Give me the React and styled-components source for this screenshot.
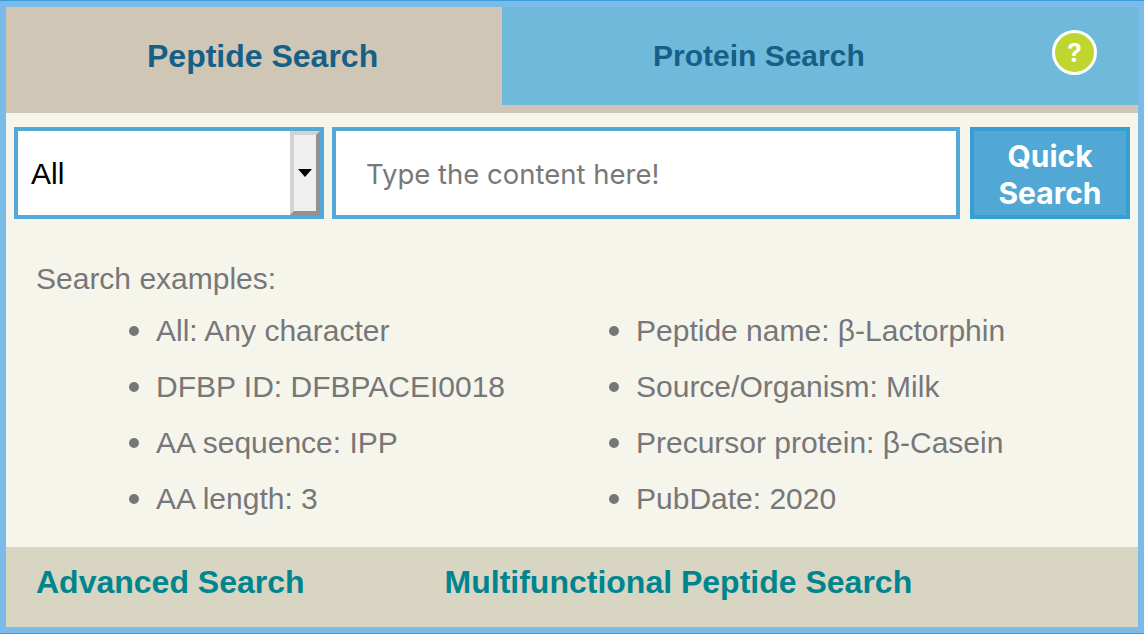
import React from "react";
import styled, { createGlobalStyle } from "styled-components";

const Global = createGlobalStyle`
  html, body { margin: 0; padding: 0; }
  body { width: 1144px; height: 634px; overflow: hidden; background: #7abbe9; font-family: "Liberation Sans", Arial, sans-serif; }
  * { box-sizing: border-box; }
`;

const Frame = styled.div`
  width: 1144px;
  height: 634px;
  padding: 6px;
  background: #7abbe9;
  border-top: 1px solid #3b9dd6;
  border-bottom: 1px solid #3b9dd6;
`;
const Panel = styled.div`
  height: 620px;
  display: flex;
  flex-direction: column;
  background: #f5f5ec;
`;
const Tabs = styled.div`
  display: flex;
  height: 106px;
  background: #d0c6b5;
  flex: none;
`;
const Tab = styled.div`
  height: ${(p) => (p.$active ? "106px" : "98px")};
  width: ${(p) => (p.$active ? "496px" : "636px")};
  background: ${(p) => (p.$active ? "#d0c6b5" : "#6fb9da")};
  position: relative;
  display: flex;
  align-items: center;
  padding-left: ${(p) => (p.$active ? "141px" : "151px")};
  padding-bottom: ${(p) => (p.$active ? "8px" : "0")};
  font-size: ${(p) => (p.$active ? "32px" : "30px")};
  font-weight: 700;
  color: #165f86;
`;
const Help = styled.span`
  position: absolute;
  left: 550px;
  top: 23px;
  width: 45px;
  height: 45px;
  border-radius: 50%;
  border: 3px solid #fff;
  background: #bed62f;
  color: #fff;
  font: 700 26px/39px "Inter", sans-serif;
  text-align: center;
`;
const SearchRow = styled.div`
  display: flex;
  padding: 14px 8px 0;
  height: 106px;
  flex: none;
`;
const SelectBox = styled.div`
  position: relative;
  width: 310px;
  height: 92px;
  margin-right: 8px;
  border: 4px solid #52a8d6;
  background: #fff;
`;
const Select = styled.select`
  appearance: none;
  width: 100%;
  height: 100%;
  border: 0;
  outline: 0;
  background: #fff;
  padding-left: 13px;
  font: 30px "Liberation Sans", sans-serif;
  color: #000;
`;
const Spinner = styled.span`
  position: absolute;
  right: 0;
  top: 0;
  bottom: 0;
  width: 30px;
  background: #efefef;
  border-style: solid;
  border-width: 4px;
  border-color: #d3d3d3 #929292 #929292 #d3d3d3;
  pointer-events: none;
  &::after {
    content: "";
    position: absolute;
    left: 4px;
    top: 34px;
    border-style: solid;
    border-width: 8px 7px 0;
    border-color: #000 transparent transparent;
  }
`;
const Query = styled.input`
  width: 628px;
  height: 92px;
  margin-right: 10px;
  border: 4px solid #52a8d6;
  background: #fff;
  outline: 0;
  padding: 2px 30px 0;
  font: 27.5px "Inter", sans-serif;
  &::placeholder { color: #787878; opacity: 1; }
`;
const QuickButton = styled.button`
  width: 160px;
  height: 92px;
  border: 4px solid #369ed0;
  background: #52a8d4;
  color: #fff;
  padding: 4px 10px 0;
  font: 700 30px/37px "Inter", sans-serif;
`;
const Examples = styled.div`
  flex: 1;
  padding: 44px 30px 0;
  color: #777779;
  font-size: 30px;
`;
const Heading = styled.div`
  line-height: 31px;
  margin-bottom: 7px;
`;
const Columns = styled.div`
  display: grid;
  grid-template-columns: 480px 480px;
  padding-left: 90px;
`;
const List = styled.ul`
  margin: 0;
  padding: 0 0 0 30px;
  li { height: 56px; line-height: 56px; }
  li::marker { font-size: 34px; }
`;
const Footer = styled.div`
  height: 80px;
  flex: none;
  display: flex;
  align-items: center;
  background: #d8d5c3;
  padding: 0 0 9px 30px;
  gap: 140px;
`;
const FooterLink = styled.a`
  font-size: 32px;
  font-weight: 700;
  color: #00858f;
`;

const left = ["All: Any character", "DFBP ID: DFBPACEI0018", "AA sequence: IPP", "AA length: 3"];
const right = ["Peptide name: β-Lactorphin", "Source/Organism: Milk", "Precursor protein: β-Casein", "PubDate: 2020"];

export default function App() {
  return (
    <>
      <Global />
      <Frame>
        <Panel>
          <Tabs>
            <Tab $active>Peptide Search</Tab>
            <Tab>
              Protein Search
              <Help>?</Help>
            </Tab>
          </Tabs>
          <SearchRow>
            <SelectBox>
              <Select defaultValue="All"><option>All</option></Select>
              <Spinner />
            </SelectBox>
            <Query placeholder="Type the content here!" />
            <QuickButton>Quick Search</QuickButton>
          </SearchRow>
          <Examples>
            <Heading>Search examples:</Heading>
            <Columns>
              <List>{left.map((t) => <li key={t}>{t}</li>)}</List>
              <List>{right.map((t) => <li key={t}>{t}</li>)}</List>
            </Columns>
          </Examples>
          <Footer>
            <FooterLink>Advanced Search</FooterLink>
            <FooterLink>Multifunctional Peptide Search</FooterLink>
          </Footer>
        </Panel>
      </Frame>
    </>
  );
}
